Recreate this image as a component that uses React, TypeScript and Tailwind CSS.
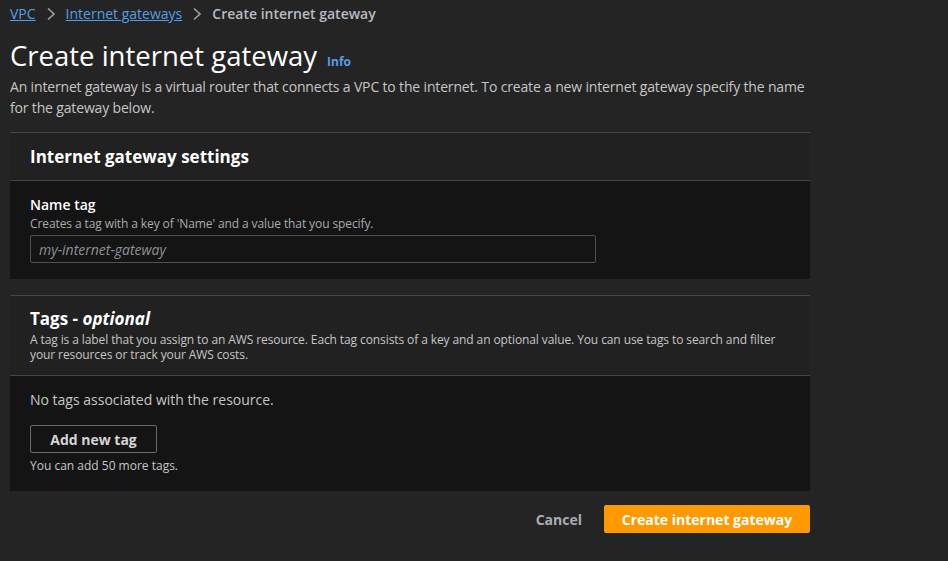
export default function App() {
  return (
    <div className="min-h-[561px] bg-[#242424] px-[10px] text-[#d1d5db]" style={{ fontFamily: '"Open Sans", "Noto Sans", Arial, sans-serif' }}>
      <nav className="flex h-[27px] items-center gap-[10px] text-[14px]">
        <a href="#" className="text-[#539fe5] underline">VPC</a>
        <svg width="10" height="14" viewBox="0 0 10 14" fill="none" stroke="#9ca3af" strokeWidth="1.6">
          <path d="M2 1.5 L8 7 L2 12.5" />
        </svg>
        <a href="#" className="text-[#539fe5] underline">Internet gateways</a>
        <svg width="10" height="14" viewBox="0 0 10 14" fill="none" stroke="#9ca3af" strokeWidth="1.6">
          <path d="M2 1.5 L8 7 L2 12.5" />
        </svg>
        <span className="font-semibold text-[#b8bcc2]">Create internet gateway</span>
      </nav>

      <div className="mt-[13px] flex items-baseline gap-[10px]">
        <h1 className="text-[27.5px] leading-[32px] text-white">Create internet gateway</h1>
        <a href="#" className="text-[12px] font-bold text-[#539fe5]">Info</a>
      </div>
      <p className="mt-[4px] w-[805px] text-[14px] leading-[21px] tracking-[-0.16px] text-[#c6c6c6]">
        An internet gateway is a virtual router that connects a VPC to the internet. To create a new internet gateway specify the name for the gateway below.
      </p>

      <section className="mt-[14px] w-[800px] border-t border-[#464646] bg-[#141414]">
        <div className="flex h-[48px] items-center border-b border-[#464646] bg-[#212121] px-[20px]">
          <h2 className="text-[17px] font-bold text-white">Internet gateway settings</h2>
        </div>
        <div className="px-[20px] pb-[16px] pt-[14px]">
          <div className="text-[14px] font-semibold leading-[20px] text-white">Name tag</div>
          <div className="text-[12px] leading-[18px] tracking-[-0.1px] text-[#a7acb2]">Creates a tag with a key of 'Name' and a value that you specify.</div>
          <input
            placeholder="my-internet-gateway"
            className="mt-[2px] h-[28px] w-[566px] rounded-[2px] border border-[#505050] bg-[#141414] px-[8px] text-[14px] italic text-white placeholder:text-[#8d9096] outline-none"
          />
        </div>
      </section>

      <section className="mt-[16px] w-[800px] border-t border-[#464646] bg-[#141414]">
        <div className="border-b border-[#464646] bg-[#212121] px-[20px] pb-[13px] pt-[11px]">
          <h2 className="text-[17px] font-bold leading-[24px] text-white">
            Tags - <span className="italic">optional</span>
          </h2>
          <p className="mt-[1px] text-[12px] leading-[15px] tracking-[-0.1px] text-[#c6c6c6]">
            A tag is a label that you assign to an AWS resource. Each tag consists of a key and an optional value. You can use tags to search and filter your resources or track your AWS costs.
          </p>
        </div>
        <div className="px-[20px] pb-[17px] pt-[14px]">
          <div className="text-[14px] leading-[20px] text-[#c6c6c6]">No tags associated with the resource.</div>
          <button className="mt-[15px] h-[28px] w-[127px] rounded-[2px] border border-[#6b6b6b] text-[14px] font-bold text-[#d5d5d5]">
            Add new tag
          </button>
          <div className="mt-[5px] text-[12px] leading-[16px] text-[#c6c6c6]">You can add 50 more tags.</div>
        </div>
      </section>

      <div className="mt-[14px] flex w-[800px] items-center justify-end gap-[20px]">
        <button className="px-[2px] text-[14px] font-bold text-[#a9adb3]">Cancel</button>
        <button className="h-[28px] w-[206px] rounded-[2px] bg-[#ff9900] text-[14px] font-bold text-white">
          Create internet gateway
        </button>
      </div>
    </div>
  )
}
